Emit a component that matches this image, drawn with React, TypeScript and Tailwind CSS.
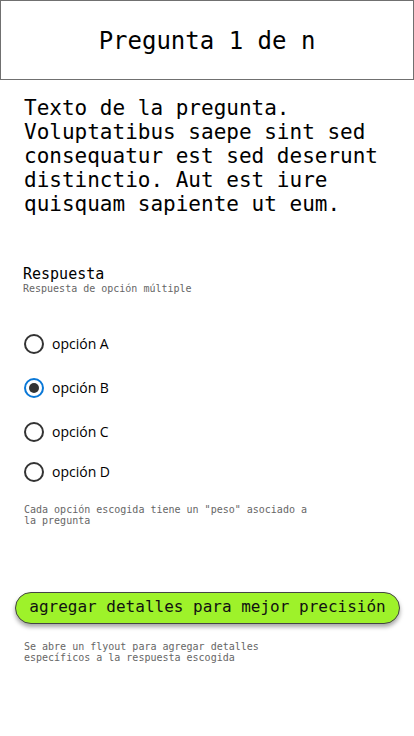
const options = ["opción A", "opción B", "opción C", "opción D"];

const mono = "font-['DejaVu_Sans_Mono',monospace]";

const Radio = ({ checked }: { checked: boolean }) => (
  <span
    className={`flex h-[20px] w-[20px] items-center justify-center rounded-full border-2 ${
      checked ? "border-[#0a78d7]" : "border-[#333333]"
    }`}
  >
    {checked && <span className="h-[10px] w-[10px] rounded-full bg-[#333333]" />}
  </span>
);

export default function App() {
  return (
    <div className={`w-[414px] min-h-[736px] bg-white text-black ${mono}`}>
      <header className="flex h-[80px] items-center justify-center border border-[#707070]">
        <h1 className="text-[24px] leading-none pt-[2px]">Pregunta 1 de n</h1>
      </header>

      <p className="px-6 pt-[16px] text-[21px] leading-[24px]">
        Texto de la pregunta. Voluptatibus saepe sint sed consequatur est sed
        deserunt distinctio. Aut est iure quisquam sapiente ut eum.
      </p>

      <div className="mt-[49px] px-[23px]">
        <h2 className="text-[15px] leading-[18px]">Respuesta</h2>
        <p className="text-[10px] leading-[12px] text-[#666666]">
          Respuesta de opción múltiple
        </p>
      </div>

      <ul className="mt-[29px] flex flex-col px-6 font-['Open_Sans',sans-serif]">
        {options.map((o, i) => (
          <li
            key={o}
            className={`flex h-[40px] items-center gap-[8px] ${i === 1 || i === 2 ? "mt-[4px]" : ""}`}
          >
            <Radio checked={i === 1} />
            <span className="text-[14px] leading-none">{o}</span>
          </li>
        ))}
      </ul>

      <p className="mt-[12px] w-[300px] px-6 text-[10px] leading-[11px] text-[#666666] box-content">
        Cada opción escogida tiene un "peso" asociado a la pregunta
      </p>

      <div className="mt-[66px] px-[15px]">
        <button className="flex h-[32px] w-[385px] items-center justify-center rounded-full border border-[#444444] bg-[#9ef22a] pb-[3px] text-[16px] text-[#111111] shadow-[0_3px_4px_rgba(0,0,0,0.35)]">
          agregar detalles para mejor precisión
        </button>
      </div>

      <p className="mt-[17px] w-[260px] px-6 text-[10px] leading-[11px] text-[#666666] box-content">
        Se abre un flyout para agregar detalles específicos a la respuesta
        escogida
      </p>
    </div>
  );
}
